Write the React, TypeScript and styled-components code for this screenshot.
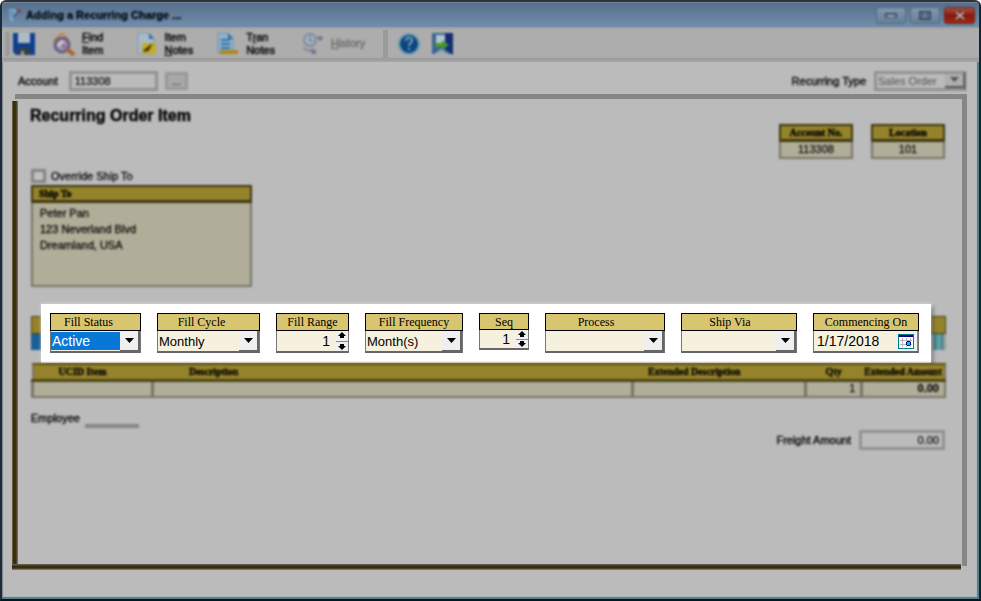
import React from 'react';
import styled, { createGlobalStyle, css } from 'styled-components';

const Global = createGlobalStyle`
  * { box-sizing: border-box; }
  body { margin: 0; background: #ffffff; font-family: "Liberation Sans", Arial, sans-serif; font-size: 11px; color: #080808; }
  button, input, select { font: inherit; color: inherit; margin: 0; }
`;

const soft = css`filter: blur(1px);`;

const Window = styled.div`
  min-height: 100vh;
  display: flex;
  flex-direction: column;
  background: #bbbbbb;
  border: 2px solid #1c2b35;
  border-top-color: #2f3338;
  border-right-color: #0b2733;
  border-bottom-color: #02141d;
  border-radius: 6px 6px 0 0;
  box-shadow: inset -2px -2px 1px #4f7f8e, inset 1px 0 1px #7f8791;
  overflow: hidden;
`;

const TitleBar = styled.header`
  height: 25px;
  display: flex;
  align-items: center;
  padding: 0 4px 0 6px;
  gap: 4px;
  background: linear-gradient(#566f8b, #728eab);
  border-top: 1px solid #70839a;
`;

const Title = styled.h1`
  ${soft}
  flex: 1;
  margin: 0;
  font-size: 11px;
  font-weight: bold;
  color: #000814;
  -webkit-text-stroke: 0.3px #000814;
`;

const WindowButton = styled.button<{ $close?: boolean }>`
  ${soft}
  width: ${p => (p.$close ? 31 : 30)}px;
  height: 17px;
  padding: 0;
  display: grid;
  place-items: center;
  border: 1px solid ${p => (p.$close ? '#6b2018' : '#526a84')};
  border-radius: 3px;
  background: ${p => (p.$close ? 'linear-gradient(#a45345, #8c1708 50%, #9c2b16)' : 'linear-gradient(#8097af, #667f99)')};
`;

const Toolbar = styled.nav`
  height: 35px;
  display: flex;
  align-items: center;
  padding: 0 4px 2px;
  background: linear-gradient(#9b9b9b 0, #adadad 3px, #adadad 30px, #999999 32px, #a8a8a8 35px);
`;

const Grip = styled.span`
  ${soft}
  width: 3px;
  height: 24px;
  margin-right: 3px;
  border-left: 1px solid #8a8a8a;
  border-right: 1px solid #7f7f7f;
`;

const Divider = styled.span`
  width: 5px;
  height: 28px;
  margin: 0 9px 0 18px;
  background: #9b9b9b;
`;

const Tool = styled.button<{ $gap: number }>`
  ${soft}
  display: flex;
  align-items: center;
  gap: 6px;
  margin-right: ${p => p.$gap}px;
  padding: 0;
  border: 0;
  background: none;
  text-align: left;
  line-height: 13px;
  -webkit-text-stroke: 0.5px #080808;
  &:disabled { color: #666666; -webkit-text-stroke: 0.3px #666666; }
`;

const AccountBar = styled.div`
  height: 32px;
  display: flex;
  align-items: center;
  justify-content: space-between;
  padding: 5px 13px 0 16px;
`;

const Group = styled.div`
  ${soft}
  display: flex;
  align-items: center;
`;

const Label = styled.label<{ $gap: number }>`
  margin-right: ${p => p.$gap}px;
  -webkit-text-stroke: 0.4px #080808;
`;

const TextBox = styled.input<{ $width: number; $right?: boolean }>`
  width: ${p => p.$width}px;
  height: 20px;
  padding: 0 3px;
  border: 3px solid #929292;
  background: #bbbbbb;
  text-align: ${p => (p.$right ? 'right' : 'left')};
  -webkit-text-stroke: 0.2px #080808;
`;

const MoreButton = styled.button`
  width: 23px;
  height: 18px;
  margin-left: 7px;
  padding: 0;
  line-height: 10px;
  border: 3px solid #999999;
  background: #a8a8a8;
`;

const TypeBox = styled.div`
  display: grid;
  grid-template-columns: 1fr 18px;
  width: 92px;
  height: 20px;
  border: 3px solid #929292;
  border-right-color: #666666;
  color: #505050;
  select {
    grid-area: 1 / 1 / 2 / 3;
    appearance: none;
    border: 0;
    padding: 0 1px;
    background: transparent;
    min-width: 0;
  }
  span {
    grid-area: 1 / 2;
    display: grid;
    place-items: center;
    background: #afafaf;
    border-bottom: 2px solid #555555;
    pointer-events: none;
  }
`;

const Panel = styled.main`
  flex: 1;
  margin: 0 12px 29px 10px;
  padding: 5px 21px 6px 19px;
  background:
    linear-gradient(#868686, #868686) right 0 top 0 / 5px calc(100% - 4px) no-repeat,
    linear-gradient(#868686, #868686) right 0 top 0 / calc(100% - 3px) 5px no-repeat,
    linear-gradient(#716c68, #3a2e10 2px, #3a2e10 4px, #928c70) left 0 bottom 0 / calc(100% - 6px) 6px no-repeat,
    linear-gradient(90deg, #8c8668, #3a2e10 1px, #3a2e10 4px, #858078) left 0 bottom 0 / 6px calc(100% - 7px) no-repeat;
`;

const PanelHead = styled.div`
  display: flex;
  justify-content: space-between;
`;

const Heading = styled.h2`
  ${soft}
  margin: 7px 0 0 -1px;
  font-size: 16px;
  line-height: 20px;
  color: #000000;
  -webkit-text-stroke: 0.4px #000000;
`;

const Summary = styled.div`
  display: flex;
  gap: 18px;
  margin: 25px 1px 0 0;
`;

const Card = styled.section<{ $width: number }>`
  ${soft}
  width: ${p => p.$width}px;
  border: 2px solid #777568;
  background: #b0ae98;
`;

const CardHead = styled.h3<{ $left?: boolean }>`
  margin: -2px;
  height: 18px;
  padding: 1px 6px 0;
  border: 2px solid #3f3712;
  border-bottom-width: 3px;
  background: #95832b;
  color: #000000;
  font: bold 10px/12px "Liberation Serif", "Times New Roman", serif;
  text-align: ${p => (p.$left ? 'left' : 'center')};
  -webkit-text-stroke: 0.4px #000000;
`;

const CardValue = styled.div`
  padding-top: 2px;
  height: 17px;
  text-align: center;
  line-height: 15px;
  -webkit-text-stroke: 0.3px #2a1a1a;
`;

const Override = styled.label`
  ${soft}
  display: flex;
  align-items: center;
  width: max-content;
  height: 16px;
  margin: 9px 0 1px;
  gap: 5px;
  -webkit-text-stroke: 0.3px #080808;
  input {
    appearance: none;
    width: 15px;
    height: 14px;
    border: 3px solid #858585;
    background: #c0c0c0;
  }
`;

const Address = styled.address`
  height: 84px;
  padding: 4px 7px;
  font-style: normal;
  line-height: 16px;
  -webkit-text-stroke: 0.3px #080808;
`;

const FillSection = styled.section`
  position: relative;
  height: 34px;
  margin-top: 29px;
`;

const FillBacking = styled.div`
  ${soft}
  display: flex;
  flex-direction: column;
  height: 100%;
  background: #a3a29a;
  &::before { content: ""; height: 16px; background: #95832b; border: 1px solid #4a4116; }
  &::after { content: ""; flex: 1; background: linear-gradient(90deg, #1a5f96 14px, #b0ae98 14px, #b0ae98 calc(100% - 13px), #2b8296 calc(100% - 12px), #79a5aa calc(100% - 6px), #2b7786 calc(100% - 4px), #99a0a0 calc(100% - 2px)); }
`;

const FillStrip = styled.div`
  position: absolute;
  inset: -12px 15px auto 10px;
  display: grid;
  grid-template-columns: 91fr 103fr 73fr 98fr 50fr 120fr 116fr 106fr;
  align-items: start;
  gap: 16px;
  height: 59px;
  padding: 9px 12px 0 9px;
  background: #ffffff;
  box-shadow: 0 0 3px #e8e8e8, 2px 3px 4px rgba(0, 0, 0, 0.45);
`;

const Field = styled.div<{ $short?: boolean }>`
  display: grid;
  grid-template-rows: ${p => (p.$short ? '17px 20px' : '18px 22px')};
  min-width: 0;
`;

const FieldLabel = styled.label<{ $trail?: number }>`
  padding-right: ${p => p.$trail ?? 0}px;
  border: 1px solid #000000;
  background: #d8c570;
  color: #000000;
  font: 12px/16px "Liberation Serif", "Times New Roman", serif;
  text-align: center;
  white-space: nowrap;
`;

const FieldBody = styled.div<{ $spin?: boolean; $date?: boolean }>`
  display: grid;
  grid-template-columns: minmax(0, 1fr) ${p => (p.$spin ? 12 : p.$date ? 23 : 20)}px;
  border: 1px solid #777777;
  border-bottom: 2px solid #666666;
  border-top: 0;
  background: #f5f1de;
  color: #000000;
`;

const Select = styled.select<{ $active?: boolean }>`
  grid-area: 1 / 1;
  appearance: none;
  min-width: 0;
  margin: 1px 0;
  padding: 0 1px;
  border: 0;
  border-radius: 0;
  outline: 0;
  background: ${p => (p.$active ? '#0878d8' : '#f5f1de')};
  color: ${p => (p.$active ? '#ffffff' : '#000000')};
  font-size: ${p => (p.$active ? 14 : 13)}px;
`;

const Entry = styled.input<{ $date?: boolean }>`
  min-width: 0;
  padding: 0 ${p => (p.$date ? 3 : 6)}px;
  border: 0;
  background: transparent;
  font-size: 14px;
  text-align: ${p => (p.$date ? 'left' : 'right')};
`;

const Drop = styled.span`
  display: grid;
  place-items: center;
  border-right: 2px solid #666666;
  border-bottom: 1px solid #666666;
  background: #efefef;
  pointer-events: none;
`;

const Spinner = styled.span`
  display: grid;
  grid-template-rows: 1fr 1fr;
  gap: 1px;
  background: #888888;
  button {
    display: grid;
    place-items: center;
    min-height: 0;
    padding: 0;
    border: 0;
    background: #f0f0f0;
  }
`;

const DateButton = styled.button`
  display: grid;
  place-items: center;
  padding: 0;
  border: 0;
  border-right: 1px solid #888888;
  background: #f0f0f0;
`;

const Items = styled.table`
  ${soft}
  width: 100%;
  margin-top: 13px;
  table-layout: fixed;
  border-collapse: collapse;
  border: 2px solid #77756a;
  th {
    height: 16px;
    padding: 0;
    background: #95832b;
    border-top: 2px solid #5c5117;
    border-bottom: 3px solid #4d4416;
    color: #000000;
    font: bold 10px/11px "Liberation Serif", "Times New Roman", serif;
    text-align: center;
    white-space: nowrap;
    -webkit-text-stroke: 0.3px #000000;
  }
  td {
    height: 17px;
    padding: 0 5px;
    border-left: 3px solid #77756a;
    background: #b0ae98;
    line-height: 13px;
    text-align: right;
    -webkit-text-stroke: 0.3px #2a1a1a;
  }
`;

const Th = styled.th<{ $width: string; $indent?: number }>`
  width: ${p => p.$width};
  ${p => p.$indent && css`&&& { text-align: left; padding-left: ${p.$indent}px; }`}
`;

const Strong = styled.td`font-weight: bold;`;

const Footer = styled.div`
  display: flex;
  justify-content: space-between;
  align-items: flex-start;
  padding: 10px 1px 0 0;
`;

const EmployeeInput = styled.input`
  width: 54px;
  height: 20px;
  border: 0;
  border-bottom: 4px solid #868686;
  background: transparent;
`;

const Freight = styled(Group)`margin-top: 22px;`;

const Arrow = () => (
  <svg width="9" height="5" viewBox="0 0 9 5" aria-hidden="true"><path d="M0 0h9L4.5 5z" fill="currentColor" /></svg>
);

const AppIcon = () => (
  <svg width="14" height="14" viewBox="0 0 14 14" aria-hidden="true">
    <path d="M1 1h6l2 3-3 9H2z" fill="#86a6c3" />
    <path d="M2 4h4M3 7h4M4 10h3" stroke="#326b9e" />
    <path d="M6 9l4-5" stroke="#315d99" strokeWidth="2" />
    <circle cx="11" cy="3" r="2" fill="#844452" />
  </svg>
);

const SaveIcon = () => (
  <svg width="24" height="24" viewBox="0 0 24 24" aria-hidden="true">
    <path d="M1 1h22v22H4l-3-3z" fill="#103f91" />
    <path d="M6 1h12v10H6z" fill="#aebac4" />
    <path d="M6 15h12v8H6z" fill="#303f50" />
    <path d="M9 19h3v4H9z" fill="#9a9a90" />
  </svg>
);

const FindIcon = () => (
  <svg width="25" height="25" viewBox="0 0 25 25" aria-hidden="true">
    <path d="M2 9L11 1l7 7-6 9z" fill="#bd8741" />
    <path d="M7 7l4-3 3 3" fill="#d1ba8e" />
    <circle cx="11" cy="14" r="7" fill="#9a94b2" stroke="#6d5c7e" strokeWidth="3" />
    <path d="M8 11l7 6" stroke="#9c5f6d" strokeWidth="2" />
    <path d="M7 15l5-5" stroke="#d0d0da" strokeWidth="3" />
    <path d="M16 18l7 6" stroke="#a8642b" strokeWidth="4" />
  </svg>
);

const NoteIcon = () => (
  <svg width="22" height="24" viewBox="0 0 22 24" aria-hidden="true">
    <path d="M2 1h11l5 6v15H2z" fill="#a8b9c7" stroke="#8299ad" />
    <path d="M13 1v6h5z" fill="#346ba5" />
    <path d="M6 11h14v11H6z" fill="#c2ad29" />
    <path d="M7 19l9-7-4 7z" fill="#3e3514" stroke="#4b3d10" />
  </svg>
);

const TranIcon = () => (
  <svg width="24" height="24" viewBox="0 0 24 24" aria-hidden="true">
    <path d="M2 1h10l5 5v15H2z" fill="#8eb0cb" stroke="#6e91b0" />
    <path d="M12 1v6h5z" fill="#386b9b" />
    <path d="M5 8h9M5 12h9M5 16h9" stroke="#2f73ad" strokeWidth="2" />
    <path d="M4 18h18v4H4z" fill="#b08818" />
  </svg>
);

const HistoryIcon = () => (
  <svg width="24" height="24" viewBox="0 0 24 24" aria-hidden="true">
    <circle cx="9" cy="8" r="6" fill="#9fb3ba" stroke="#85879c" strokeWidth="2" />
    <path d="M9 4v5h3" fill="none" stroke="#547b85" />
    <path d="M2 16l6 3 5-2" fill="none" stroke="#8b86a0" strokeWidth="2" />
    <path d="M9 18h6v4h-4z" fill="#7b7396" />
    <path d="M16 6h6M19 4v5" stroke="#756e91" strokeWidth="2" />
  </svg>
);

const HelpIcon = () => (
  <svg width="24" height="24" viewBox="0 0 24 24" aria-hidden="true">
    <circle cx="12" cy="12" r="11" fill="#6f9eae" />
    <circle cx="12" cy="12" r="9" fill="#0c4680" />
    <path d="M9 9c0-5 7-4 6 0-1 2-3 2-3 5M12 16v2" fill="none" stroke="#7fa0bb" strokeWidth="2" />
  </svg>
);

const ExitIcon = () => (
  <svg width="24" height="24" viewBox="0 0 24 24" aria-hidden="true">
    <path d="M1 1h21v21H1z" fill="#3b6690" />
    <path d="M5 3h9v10H5z" fill="#b4c6cd" />
    <path d="M14 1h8v22l-8-6z" fill="#132c74" />
    <path d="M4 11h7V8l7 5-7 5v-3H4z" fill="#4a962f" />
    <path d="M3 22l7-5 8 5z" fill="#93abb3" />
  </svg>
);

const CalendarIcon = () => (
  <svg width="16" height="15" viewBox="0 0 16 15" shapeRendering="crispEdges" aria-hidden="true">
    <path d="M0 0h16v15H0z" fill="#008080" />
    <path d="M1 1h14v13H1z" fill="#ffffff" />
    <path d="M1 1h14v2H1z" fill="#000080" />
    <path d="M2 6h12v1H2zM2 10h12v1H2zM4 4h1v9H4zM8 4h1v9H8zM12 4h1v9h-1z" fill="#b8b8b8" />
    <path d="M9 7h3v1h1v3h-1v1H9v-1H8V8h1z" fill="#000080" />
    <path d="M9 8h3v3H9z" fill="#00c8e0" />
  </svg>
);

const SpinButtons = ({ name }: { name: string }) => (
  <Spinner>
    <button aria-label={`Increase ${name}`}><svg width="8" height="7" viewBox="0 0 8 7"><path d="M4 0l4 4H6v2H2V4H0z" /></svg></button>
    <button aria-label={`Decrease ${name}`}><svg width="8" height="7" viewBox="0 0 8 7"><path d="M4 7l4-4H6V1H2v2H0z" /></svg></button>
  </Spinner>
);

type SelectFieldProps = { id: string; label: string; value: string; active?: boolean; trail?: number };

const SelectField = ({ id, label, value, active, trail }: SelectFieldProps) => (
  <Field>
    <FieldLabel htmlFor={id} $trail={trail}>{label}</FieldLabel>
    <FieldBody>
      <Select id={id} $active={active}><option>{value}</option></Select>
      <Drop><Arrow /></Drop>
    </FieldBody>
  </Field>
);

const SpinField = ({ id, label, short }: { id: string; label: string; short?: boolean }) => (
  <Field $short={short}>
    <FieldLabel htmlFor={id}>{label}</FieldLabel>
    <FieldBody $spin>
      <Entry id={id} defaultValue="1" />
      <SpinButtons name={label} />
    </FieldBody>
  </Field>
);

const IconBlur = styled.span`${soft} display: flex;`;

export default function App() {
  return (
    <>
      <Global />
      <Window>
        <TitleBar>
          <IconBlur><AppIcon /></IconBlur>
          <Title>Adding a Recurring Charge ...</Title>
          <WindowButton aria-label="Minimize"><svg width="12" height="5"><path d="M0 0h12v5H0z" fill="#415064" /><path d="M2 2h8v2H2z" fill="#a6b0bb" /></svg></WindowButton>
          <WindowButton aria-label="Maximize"><svg width="12" height="9"><path d="M1 1h10v7H1zM4 3v3M8 3v3" fill="#8393a5" stroke="#35485f" strokeWidth="2" /></svg></WindowButton>
          <WindowButton $close aria-label="Close"><svg width="12" height="9"><path d="M2 1l8 7M10 1L2 8" stroke="#4d1a15" strokeWidth="4" /><path d="M2 1l8 7M10 1L2 8" stroke="#c9aaa4" strokeWidth="2" /></svg></WindowButton>
        </TitleBar>
        <Toolbar>
          <Grip />
          <Tool $gap={15} aria-label="Save"><SaveIcon /></Tool>
          <Tool $gap={33}><FindIcon /><span><u>F</u>ind<br />Item</span></Tool>
          <Tool $gap={23}><NoteIcon /><span>Item<br /><u>N</u>otes</span></Tool>
          <Tool $gap={26}><TranIcon /><span>T<u>r</u>an<br />Notes</span></Tool>
          <Tool $gap={0} disabled><HistoryIcon /><span><u>H</u>istory</span></Tool>
          <Divider />
          <Tool $gap={10} aria-label="Help"><HelpIcon /></Tool>
          <Tool $gap={0} aria-label="Exit"><ExitIcon /></Tool>
        </Toolbar>
        <AccountBar>
          <Group>
            <Label htmlFor="account" $gap={11}>Account</Label>
            <TextBox id="account" $width={89} defaultValue="113308" />
            <MoreButton aria-label="Find account">...</MoreButton>
          </Group>
          <Group>
            <Label htmlFor="type" $gap={8}>Recurring Type</Label>
            <TypeBox>
              <select id="type"><option>Sales Order</option></select>
              <span><Arrow /></span>
            </TypeBox>
          </Group>
        </AccountBar>
        <Panel>
          <PanelHead>
            <Heading>Recurring Order Item</Heading>
            <Summary>
              <Card $width={74}><CardHead>Account No.</CardHead><CardValue>113308</CardValue></Card>
              <Card $width={74}><CardHead>Location</CardHead><CardValue>101</CardValue></Card>
            </Summary>
          </PanelHead>
          <Override><input type="checkbox" />Override Ship To</Override>
          <Card $width={221}>
            <CardHead $left>Ship To</CardHead>
            <Address>Peter Pan<br />123 Neverland Blvd<br />Dreamland, USA</Address>
          </Card>
          <FillSection>
            <FillBacking />
            <FillStrip>
              <SelectField id="status" label="Fill Status" value="Active" active trail={14} />
              <SelectField id="cycle" label="Fill Cycle" value="Monthly" trail={14} />
              <SpinField id="range" label="Fill Range" />
              <SelectField id="frequency" label="Fill Frequency" value="Month(s)" />
              <SpinField id="seq" label="Seq" short />
              <SelectField id="process" label="Process" value="" trail={18} />
              <SelectField id="via" label="Ship Via" value="" trail={18} />
              <Field>
                <FieldLabel htmlFor="date">Commencing On</FieldLabel>
                <FieldBody $date>
                  <Entry id="date" $date defaultValue="1/17/2018" />
                  <DateButton aria-label="Choose date"><CalendarIcon /></DateButton>
                </FieldBody>
              </Field>
            </FillStrip>
          </FillSection>
          <Items>
            <thead>
              <tr>
                <Th $width="13.2%" $indent={25}>UCID Item</Th>
                <Th $width="52.5%" $indent={36}>Description</Th>
                <Th $width="19%" $indent={16}>Extended Description</Th>
                <Th $width="6.2%">Qty</Th>
                <Th $width="9.1%">Extended Amount</Th>
              </tr>
            </thead>
            <tbody>
              <tr><td /><td /><td /><td>1</td><Strong>0.00</Strong></tr>
            </tbody>
          </Items>
          <Footer>
            <Group>
              <Label htmlFor="employee" $gap={5}>Employee</Label>
              <EmployeeInput id="employee" />
            </Group>
            <Freight>
              <Label htmlFor="freight" $gap={8}>Freight Amount</Label>
              <TextBox id="freight" $width={86} $right defaultValue="0.00" />
            </Freight>
          </Footer>
        </Panel>
      </Window>
    </>
  );
}
